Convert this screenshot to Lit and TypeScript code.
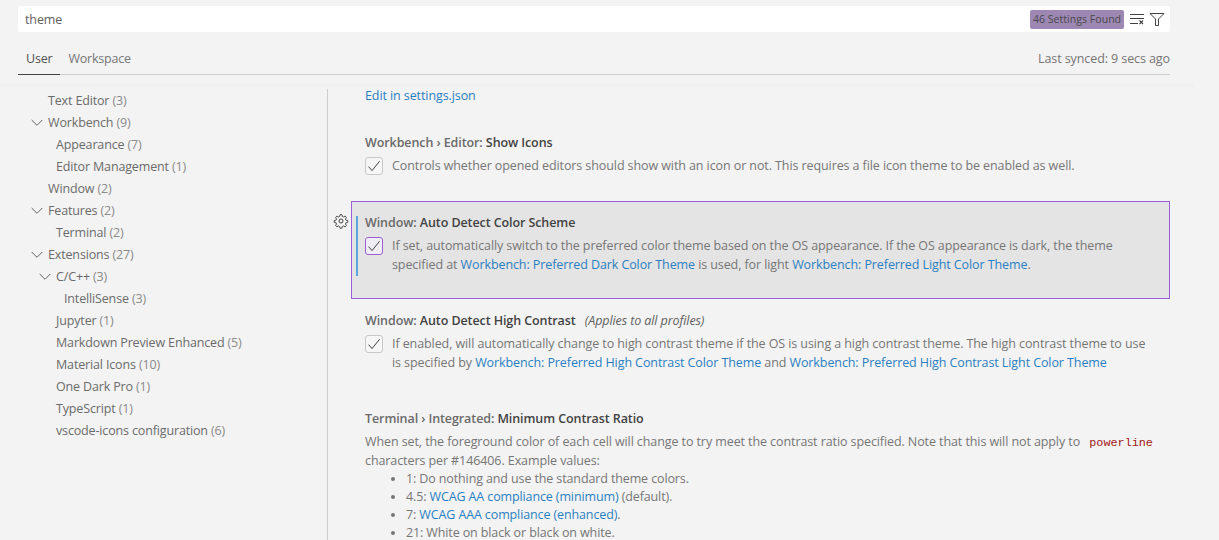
import { LitElement, html, css, svg } from "lit";
import { customElement } from "lit/decorators.js";

const tree: [string, string, number, boolean][] = [
  ["Text Editor", "(3)", 1, false],
  ["Workbench", "(9)", 1, true],
  ["Appearance", "(7)", 2, false],
  ["Editor Management", "(1)", 2, false],
  ["Window", "(2)", 1, false],
  ["Features", "(2)", 1, true],
  ["Terminal", "(2)", 2, false],
  ["Extensions", "(27)", 1, true],
  ["C/C++", "(3)", 2, true],
  ["IntelliSense", "(3)", 3, false],
  ["Jupyter", "(1)", 2, false],
  ["Markdown Preview Enhanced", "(5)", 2, false],
  ["Material Icons", "(10)", 2, false],
  ["One Dark Pro", "(1)", 2, false],
  ["TypeScript", "(1)", 2, false],
  ["vscode-icons configuration", "(6)", 2, false],
];

const check = svg`<svg width="16" height="16" viewBox="0 0 16 16"><path d="M2.6 8.6 L6 12.6 L13.6 3.2" fill="none" stroke="#424242" stroke-width="1"/></svg>`;

@customElement("app-root")
export class AppRoot extends LitElement {
  static styles = css`
    :host { display: block; width: 1219px; height: 540px; overflow: hidden; background: #f3f3f3; font-family: "Open Sans", "Noto Sans", sans-serif; font-size: 12.5px; letter-spacing: -0.09px; color: #616161; }
    .header { padding: 6px 49px 0 18px; height: 84px; box-sizing: border-box; }
    .search { height: 26px; background: #fff; border-radius: 2px; display: flex; align-items: center; padding: 0 5px 0 7px; color: #616161; }
    .search .q { flex: 1; }
    .badge { background: #9d87b3; color: #4a4a4a; width: 94px; box-sizing: border-box; text-align: center; white-space: nowrap; height: 19px; line-height: 19px; border-radius: 2px; margin-right: 5px; font-size: 10.6px; letter-spacing: 0; }
    .search svg { display: block; }
    .search .filter { margin-left: 4px; }
    .tabs { display: flex; align-items: stretch; height: 42px; border-bottom: 1px solid #cecece; box-sizing: content-box; }
    .tab { padding: 0 8px 7px; display: flex; align-items: flex-end; height: 35px; box-sizing: content-box; color: #767676; letter-spacing: -0.2px; }
    .tab.on { color: #505050; border-bottom: 1px solid #424242; margin-bottom: -1px; }
    .sync { margin-left: auto; align-self: flex-end; padding-bottom: 7px; color: #767676; }
    .shadow { height: 5px; margin-right: 25px; background: linear-gradient(#efefef, #f3f3f3); }
    .body { display: flex; height: 451px; }
    .side { width: 328px; flex: none; box-sizing: border-box; border-right: 1px solid #cecece; }
    .row { height: 22px; display: flex; align-items: center; position: relative; white-space: pre; color: #6b6b6b; letter-spacing: -0.15px; }
    .row .n { color: #8a8a8a; }
    .row svg { position: absolute; top: 3px; }
    .main { flex: 1; padding-left: 23px; min-width: 0; padding-right: 49px; position: relative; }
    .edit { padding-left: 14px; height: 13px; line-height: 13px; }
    a { color: #2a7fc2; text-decoration: none; }
    .set { position: relative; padding: 11px 13px; box-sizing: border-box; border: 1px solid transparent; }
    .s1 { height: 99px; padding-top: 30px; }
    .s2 { height: 98px; background: #e4e4e4; border-color: #9a5fd8; }
    .s3 { height: 98px; }
    .title { line-height: 20px; height: 18px; color: #616161; white-space: nowrap; }
    .title b { font-weight: 600; color: #424242; }
    .title .cat { font-weight: 600; color: #6a6a6a; }
    .title i { margin-left: 6px; color: #616161; font-weight: 400; }
    .cb { display: flex; gap: 9px; margin-top: 6px; }
    .box { width: 16px; height: 16px; flex: none; background: #f6f6f6; border: 1px solid #c8c8c8; border-radius: 3px; }
    .s2 .box { border-color: #9a5fd8; background: #f1edf5; }
    .box svg { display: block; }
    .desc { color: #767676; line-height: 19px; margin-top: -1px; }
    .bar { position: absolute; left: 4px; top: 14px; width: 2px; height: 60px; background: #5ba7dd; }
    .gear { position: absolute; left: -19px; top: 11px; }
    .s4 { padding: 11px 13px 0; border: 1px solid transparent; }
    .s4 .desc { margin-top: 5px; }
    ul { margin: 0; padding: 0 0 0 41px; line-height: 18px; color: #767676; list-style: disc; letter-spacing: -0.12px; }
    code { font-family: "Liberation Mono", monospace; font-size: 11.8px; line-height: 1; letter-spacing: 0; color: #a31515; margin-left: 6px; }
  `;

  render() {
    return html`
      <div class="header">
        <div class="search">
          <span class="q">theme</span>
          <span class="badge">46 Settings Found</span>
          <svg width="16" height="16" viewBox="0 0 16 16" fill="none" stroke="#424242"><path d="M1 3.5h14M1 7.5h14M1 12.5h8"/><path d="M10.5 9.5l3.5 3.5M14 9.5l-3.5 3.5" stroke-width="1.1"/></svg>
          <svg class="filter" width="16" height="16" viewBox="0 0 16 16" fill="none" stroke="#424242"><path d="M1 2.5h14l-5.5 5.5v6.5h-3V8z"/></svg>
        </div>
        <div class="tabs">
          <div class="tab on">User</div>
          <div class="tab">Workspace</div>
          <div class="sync">Last synced: 9 secs ago</div>
        </div>
      </div>
      <div class="shadow"></div>
      <div class="body">
        <div class="side">
          ${tree.map(([t, n, lvl, open]) => html`
            <div class="row" style="padding-left:${40 + lvl * 8}px">
              ${open ? html`<svg style="left:${21 + lvl * 8}px" width="16" height="16" viewBox="0 0 16 16" fill="none" stroke="#616161"><path d="M2.7 6 L8 11.3 L13.3 6"/></svg>` : ""}
              ${t} <span class="n">${n}</span>
            </div>`)}
        </div>
        <div class="main">
          <div class="edit"><a>Edit in settings.json</a></div>
          <div class="set s1">
            <div class="title"><span class="cat">Workbench › Editor: </span><b>Show Icons</b></div>
            <div class="cb"><div class="box">${check}</div><div class="desc">Controls whether opened editors should show with an icon or not. This requires a file icon theme to be enabled as well.</div></div>
          </div>
          <div class="set s2">
            <div class="bar"></div>
            <svg class="gear" width="16" height="16" viewBox="0 0 16 16" fill="none" stroke="#424242"><circle cx="8" cy="8" r="2"/><path d="M7 1.5h2l.4 1.9 1.3.6 1.7-1 1.4 1.4-1 1.7.6 1.3 1.9.4v2l-1.9.4-.6 1.3 1 1.7-1.4 1.4-1.7-1-1.3.6-.4 1.9H7l-.4-1.9-1.3-.6-1.7 1-1.4-1.4 1-1.7-.6-1.3-1.9-.4v-2l1.9-.4.6-1.3-1-1.7 1.4-1.4 1.7 1 1.3-.6z" transform="translate(8 8) scale(.93) translate(-8 -8.3)"/></svg>
            <div class="title"><span class="cat">Window: </span><b>Auto Detect Color Scheme</b></div>
            <div class="cb"><div class="box">${check}</div><div class="desc">If set, automatically switch to the preferred color theme based on the OS appearance. If the OS appearance is dark, the theme specified at <a>Workbench: Preferred Dark Color Theme</a> is used, for light <a>Workbench: Preferred Light Color Theme</a>.</div></div>
          </div>
          <div class="set s3">
            <div class="title"><span class="cat">Window: </span><b>Auto Detect High Contrast</b> <i>(Applies to all profiles)</i></div>
            <div class="cb"><div class="box">${check}</div><div class="desc">If enabled, will automatically change to high contrast theme if the OS is using a high contrast theme. The high contrast theme to use is specified by <a>Workbench: Preferred High Contrast Color Theme</a> and <a>Workbench: Preferred High Contrast Light Color Theme</a></div></div>
          </div>
          <div class="s4">
            <div class="title"><span class="cat">Terminal › Integrated: </span><b>Minimum Contrast Ratio</b></div>
            <div class="desc">When set, the foreground color of each cell will change to try meet the contrast ratio specified. Note that this will not apply to <code>powerline</code> characters per #146406. Example values:</div>
            <ul>
              <li>1: Do nothing and use the standard theme colors.</li>
              <li>4.5: <a>WCAG AA compliance (minimum)</a> (default).</li>
              <li>7: <a>WCAG AAA compliance (enhanced)</a>.</li>
              <li>21: White on black or black on white.</li>
            </ul>
          </div>
        </div>
      </div>
    `;
  }
}
